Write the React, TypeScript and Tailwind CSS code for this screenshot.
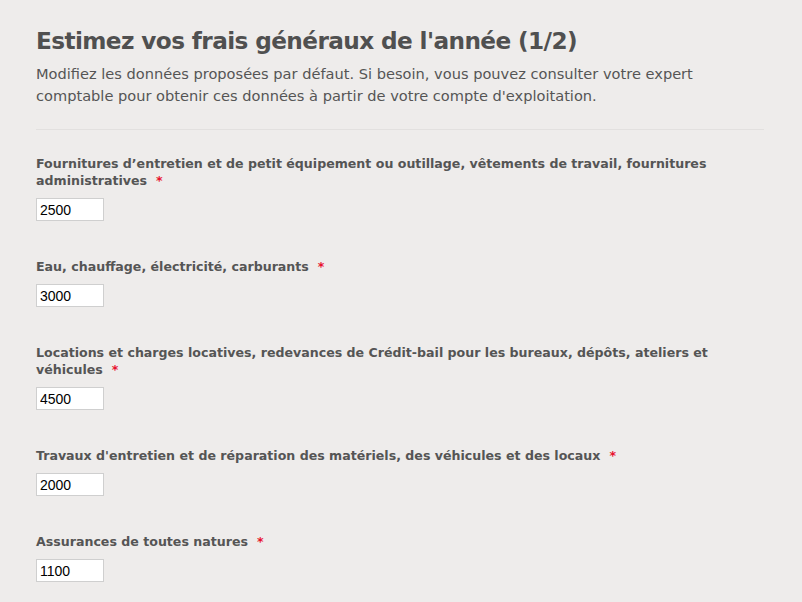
const fields = [
  {
    label:
      "Fournitures d’entretien et de petit équipement ou outillage, vêtements de travail, fournitures administratives",
    value: "2500",
  },
  { label: "Eau, chauffage, électricité, carburants", value: "3000" },
  {
    label:
      "Locations et charges locatives, redevances de Crédit-bail pour les bureaux, dépôts, ateliers et véhicules",
    value: "4500",
  },
  {
    label: "Travaux d'entretien et de réparation des matériels, des véhicules et des locaux",
    value: "2000",
  },
  { label: "Assurances de toutes natures", value: "1100" },
];

export default function App() {
  return (
    <div className="min-h-screen w-full bg-[#eeeceb] font-['DejaVu_Sans',sans-serif] text-[#555]">
      <div className="pl-[36px] pr-[38px] pt-[24px]">
        {/* Header */}
        <h1 className="text-[23.2px] font-bold leading-[34px] tracking-[-0.6px] text-[#505050]">
          Estimez vos frais généraux de l'année (1/2)
        </h1>
        <p className="mt-[5px] text-[14.6px] leading-[22px] text-[#555]">
          Modifiez les données proposées par défaut. Si besoin, vous pouvez consulter votre expert
          comptable pour obtenir ces données à partir de votre compte d'exploitation.
        </p>
        <div className="mt-[22px] border-t border-[#e2e0df]" />

        {/* Fields */}
        <div className="mt-[25px] flex flex-col gap-[37px]">
          {fields.map((f) => (
            <div key={f.value} className="flex flex-col">
              <label className="text-[12.6px] font-bold leading-[17px] text-[#555]">
                {f.label}
                <span className="ml-[9px] text-[#e8112d]">*</span>
              </label>
              <input
                defaultValue={f.value}
                className="mt-[9px] h-[23px] w-[68px] border border-[#cfcfcf] bg-white px-[3px] font-['Liberation_Sans',sans-serif] text-[14px] text-black outline-none"
              />
            </div>
          ))}
        </div>
      </div>
    </div>
  );
}
